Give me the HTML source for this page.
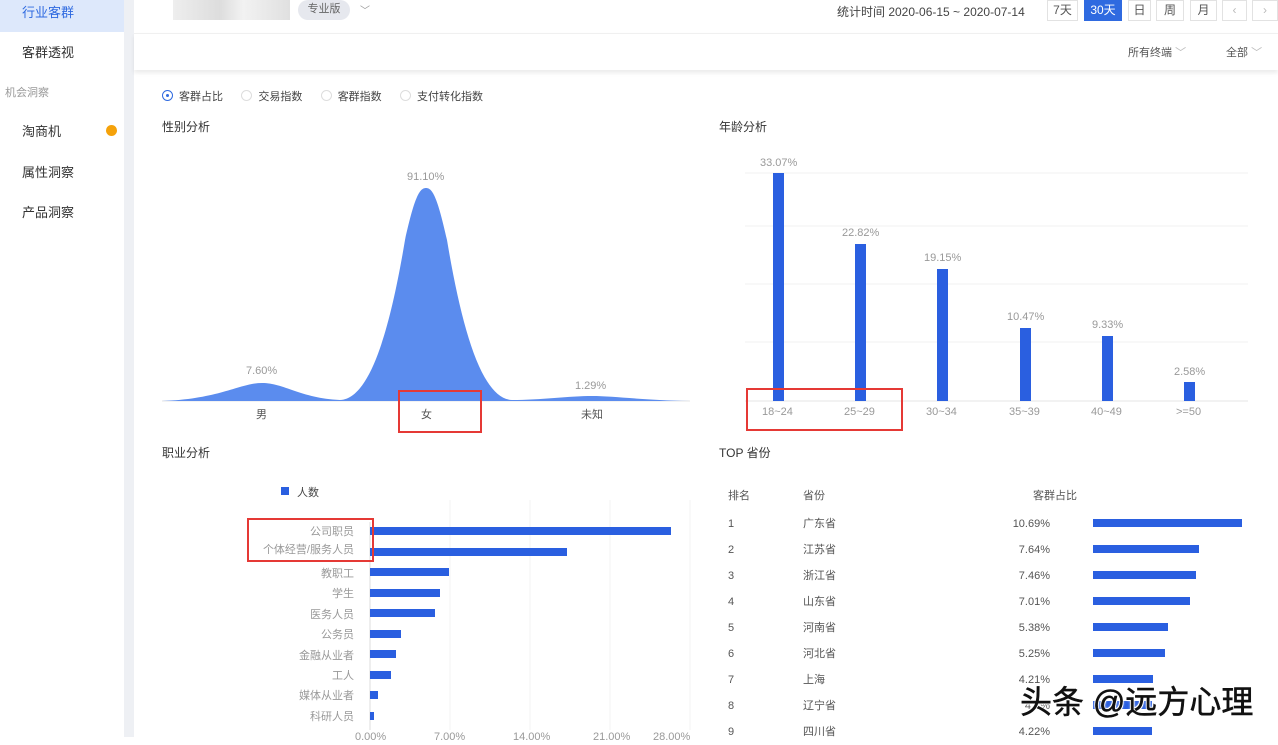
<!DOCTYPE html>
<html><head><meta charset="utf-8">
<style>
*{margin:0;padding:0;box-sizing:border-box}
body{width:1278px;height:737px;overflow:hidden;background:#fff;font-family:"Liberation Sans","Noto Sans CJK SC",sans-serif;position:relative;color:#333}
.a{position:absolute;white-space:nowrap}
.side{left:0;top:0;width:124px;height:737px;background:#fff}
.strip{left:124px;top:0;width:10px;height:737px;background:#eef0f4}
.si{font-size:13px;color:#333;left:22px}
.btn{top:0;height:21px;border:1px solid #e2e2e2;font-size:12px;color:#555;text-align:center;line-height:19px;background:#fff}
.g{font-size:11px;color:#999}
.t{font-size:12px;color:#333}
.bar{background:#2a5fe0;position:absolute}
.red{position:absolute;border:2px solid #e53935}
.rad{display:inline-block;width:11px;height:11px;border:1px solid #ddd;border-radius:50%;vertical-align:-1px;margin-right:6px}
</style></head><body>
<div class="a side"></div>
<div class="a" style="left:0;top:0;width:124px;height:32px;background:#dde8fb"></div>
<div class="a si" style="top:2px;color:#2f6ae0">行业客群</div>
<div class="a si" style="top:42px">客群透视</div>
<div class="a" style="left:5px;top:84px;font-size:11px;color:#999">机会洞察</div>
<div class="a si" style="top:121px">淘商机</div>
<div class="a" style="left:106px;top:125px;width:11px;height:11px;border-radius:50%;background:#f5a20a"></div>
<div class="a si" style="top:162px">属性洞察</div>
<div class="a si" style="top:202px">产品洞察</div>
<div class="a strip"></div>
<!-- header -->
<div class="a" style="left:134px;top:33px;width:1144px;height:37px;background:#fff;box-shadow:0 3px 4px rgba(0,0,0,0.08);border-top:1px solid #f0f0f0"></div>
<div class="a" style="left:173px;top:0;width:117px;height:20px;background:linear-gradient(90deg,#eee,#ddd 40%,#f2f2f2 60%,#e0e0e0)"></div>
<div class="a" style="left:298px;top:0;width:52px;height:20px;border-radius:10px;background:#e6e8ee;font-size:11px;color:#666;text-align:center;line-height:19px">专业版</div>
<div class="a" style="left:360px;top:2px;font-size:10px;color:#999">﹀</div>
<div class="a" style="left:837px;top:3px;font-size:12px;color:#444">统计时间 2020-06-15 ~ 2020-07-14</div>
<div class="a btn" style="left:1047px;width:31px">7天</div>
<div class="a btn" style="left:1084px;width:38px;background:#2f6ae0;color:#fff;border-color:#2f6ae0">30天</div>
<div class="a btn" style="left:1128px;width:23px">日</div>
<div class="a btn" style="left:1156px;width:28px">周</div>
<div class="a btn" style="left:1190px;width:27px">月</div>
<div class="a btn" style="left:1222px;width:25px;color:#bbb">‹</div>
<div class="a btn" style="left:1252px;width:26px;color:#bbb">›</div>
<div class="a" style="left:1128px;top:44px;font-size:11px;color:#555">所有终端 <span style="color:#bbb">﹀</span></div>
<div class="a" style="left:1226px;top:44px;font-size:11px;color:#555">全部 <span style="color:#bbb">﹀</span></div>
<!-- radios -->
<div class="a" style="left:162px;top:88px;font-size:11px;color:#444">
<span class="rad" style="border-color:#2f6ae0;position:relative"><span style="position:absolute;left:3px;top:3px;width:3px;height:3px;background:#2f6ae0;border-radius:50%"></span></span>客群占比&nbsp;&nbsp;&nbsp;&nbsp;&nbsp;&nbsp;<span class="rad"></span>交易指数&nbsp;&nbsp;&nbsp;&nbsp;&nbsp;&nbsp;<span class="rad"></span>客群指数&nbsp;&nbsp;&nbsp;&nbsp;&nbsp;&nbsp;<span class="rad"></span>支付转化指数</div>
<div class="a t" style="left:162px;top:118px">性别分析</div>
<div class="a t" style="left:719px;top:118px">年龄分析</div>
<div class="a t" style="left:162px;top:444px">职业分析</div>
<div class="a t" style="left:719px;top:444px">TOP 省份</div>
<svg class="a" style="left:0;top:0" width="1278" height="737">
<line x1="162" y1="401" x2="690" y2="401" stroke="#e5e5e5"/>
<path d="M162 401 C220 399 240 383 262 383 C284 383 300 398 340 400 C370 399 390 330 405 240 C415 195 420 188 426 188 C432 188 437 195 447 240 C462 330 482 399 512 400 C540 400 570 396 592 396 C614 396 640 400 690 401 Z" fill="#5b8cee"/>
<g stroke="#f0f0f0"><line x1="745" y1="173" x2="1248" y2="173"/><line x1="745" y1="226" x2="1248" y2="226"/><line x1="745" y1="284" x2="1248" y2="284"/><line x1="745" y1="342" x2="1248" y2="342"/><line x1="745" y1="401" x2="1248" y2="401" stroke="#e5e5e5"/></g>
<g stroke="#f3f3f3"><line x1="450" y1="500" x2="450" y2="730"/><line x1="530" y1="500" x2="530" y2="730"/><line x1="610" y1="500" x2="610" y2="730"/><line x1="690" y1="500" x2="690" y2="730"/></g>
<line x1="370" y1="522" x2="370" y2="730" stroke="#ddd"/>
</svg>
<div class="a g" style="left:246px;top:365px">7.60%</div>
<div class="a g" style="left:407px;top:171px">91.10%</div>
<div class="a g" style="left:575px;top:380px">1.29%</div>
<div class="a g" style="left:256px;top:406px;color:#555">男</div>
<div class="a g" style="left:421px;top:406px;color:#555">女</div>
<div class="a g" style="left:581px;top:406px;color:#555">未知</div>
<div class="bar" style="left:773px;top:173px;width:11px;height:228px"></div>
<div class="bar" style="left:855px;top:244px;width:11px;height:157px"></div>
<div class="bar" style="left:937px;top:269px;width:11px;height:132px"></div>
<div class="bar" style="left:1020px;top:328px;width:11px;height:73px"></div>
<div class="bar" style="left:1102px;top:336px;width:11px;height:65px"></div>
<div class="bar" style="left:1184px;top:382px;width:11px;height:19px"></div>
<div class="a g" style="left:760px;top:157px">33.07%</div>
<div class="a g" style="left:842px;top:227px">22.82%</div>
<div class="a g" style="left:924px;top:252px">19.15%</div>
<div class="a g" style="left:1007px;top:311px">10.47%</div>
<div class="a g" style="left:1092px;top:319px">9.33%</div>
<div class="a g" style="left:1174px;top:366px">2.58%</div>
<div class="a g" style="left:762px;top:406px">18~24</div>
<div class="a g" style="left:844px;top:406px">25~29</div>
<div class="a g" style="left:926px;top:406px">30~34</div>
<div class="a g" style="left:1009px;top:406px">35~39</div>
<div class="a g" style="left:1091px;top:406px">40~49</div>
<div class="a g" style="left:1176px;top:406px">&gt;=50</div>
<div class="a" style="left:281px;top:487px;width:8px;height:8px;background:#2a5fe0"></div>
<div class="a" style="left:297px;top:484px;font-size:11px;color:#444">人数</div>
<div class="a g" style="right:924px;top:524px;text-align:right;line-height:16px">公司职员<br><span style="line-height:21px">个体经营/服务人员</span></div>
<div class="a g" style="right:924px;top:564px;text-align:right;line-height:20.4px">教职工<br>学生<br>医务人员<br>公务员<br>金融从业者<br>工人<br>媒体从业者<br>科研人员</div>
<div class="bar" style="left:370px;top:527px;width:301px;height:8px"></div>
<div class="bar" style="left:370px;top:548px;width:197px;height:8px"></div>
<div class="bar" style="left:370px;top:568px;width:79px;height:8px"></div>
<div class="bar" style="left:370px;top:589px;width:70px;height:8px"></div>
<div class="bar" style="left:370px;top:609px;width:65px;height:8px"></div>
<div class="bar" style="left:370px;top:630px;width:31px;height:8px"></div>
<div class="bar" style="left:370px;top:650px;width:26px;height:8px"></div>
<div class="bar" style="left:370px;top:671px;width:21px;height:8px"></div>
<div class="bar" style="left:370px;top:691px;width:8px;height:8px"></div>
<div class="bar" style="left:370px;top:712px;width:4px;height:8px"></div>
<div class="a g" style="left:355px;top:731px">0.00%</div>
<div class="a g" style="left:434px;top:731px">7.00%</div>
<div class="a g" style="left:513px;top:731px">14.00%</div>
<div class="a g" style="left:593px;top:731px">21.00%</div>
<div class="a g" style="left:653px;top:731px">28.00%</div>
<div class="a g" style="left:728px;top:487px;color:#555">排名</div>
<div class="a g" style="left:803px;top:487px;color:#555">省份</div>
<div class="a g" style="left:1033px;top:487px;color:#555">客群占比</div>
<div class="a g" style="left:728px;top:511px;line-height:26px;color:#555">1<br>2<br>3<br>4<br>5<br>6<br>7<br>8<br>9</div>
<div class="a g" style="left:803px;top:511px;line-height:26px;color:#555">广东省<br>江苏省<br>浙江省<br>山东省<br>河南省<br>河北省<br>上海<br>辽宁省<br>四川省</div>
<div class="a g" style="right:228px;top:511px;line-height:26px;color:#555;text-align:right">10.69%<br>7.64%<br>7.46%<br>7.01%<br>5.38%<br>5.25%<br>4.21%<br>4.2%<br>4.22%</div>
<div class="bar" style="left:1093px;top:519px;width:149px;height:8px"></div>
<div class="bar" style="left:1093px;top:545px;width:106px;height:8px"></div>
<div class="bar" style="left:1093px;top:571px;width:103px;height:8px"></div>
<div class="bar" style="left:1093px;top:597px;width:97px;height:8px"></div>
<div class="bar" style="left:1093px;top:623px;width:75px;height:8px"></div>
<div class="bar" style="left:1093px;top:649px;width:72px;height:8px"></div>
<div class="bar" style="left:1093px;top:675px;width:60px;height:8px"></div>
<div class="bar" style="left:1093px;top:701px;width:59px;height:8px"></div>
<div class="bar" style="left:1093px;top:727px;width:59px;height:8px"></div>
<div class="red" style="left:398px;top:390px;width:84px;height:43px"></div>
<div class="red" style="left:746px;top:388px;width:157px;height:43px"></div>
<div class="red" style="left:247px;top:518px;width:127px;height:44px"></div>
<div class="a" style="left:1020px;top:677px;font-size:32px;color:#111;-webkit-text-stroke:0.5px #111;text-shadow:0 0 2px #fff,0 0 3px #fff,1px 1px 0 #fff,-1px -1px 0 #fff">头条 @远方心理</div>
</body></html>
